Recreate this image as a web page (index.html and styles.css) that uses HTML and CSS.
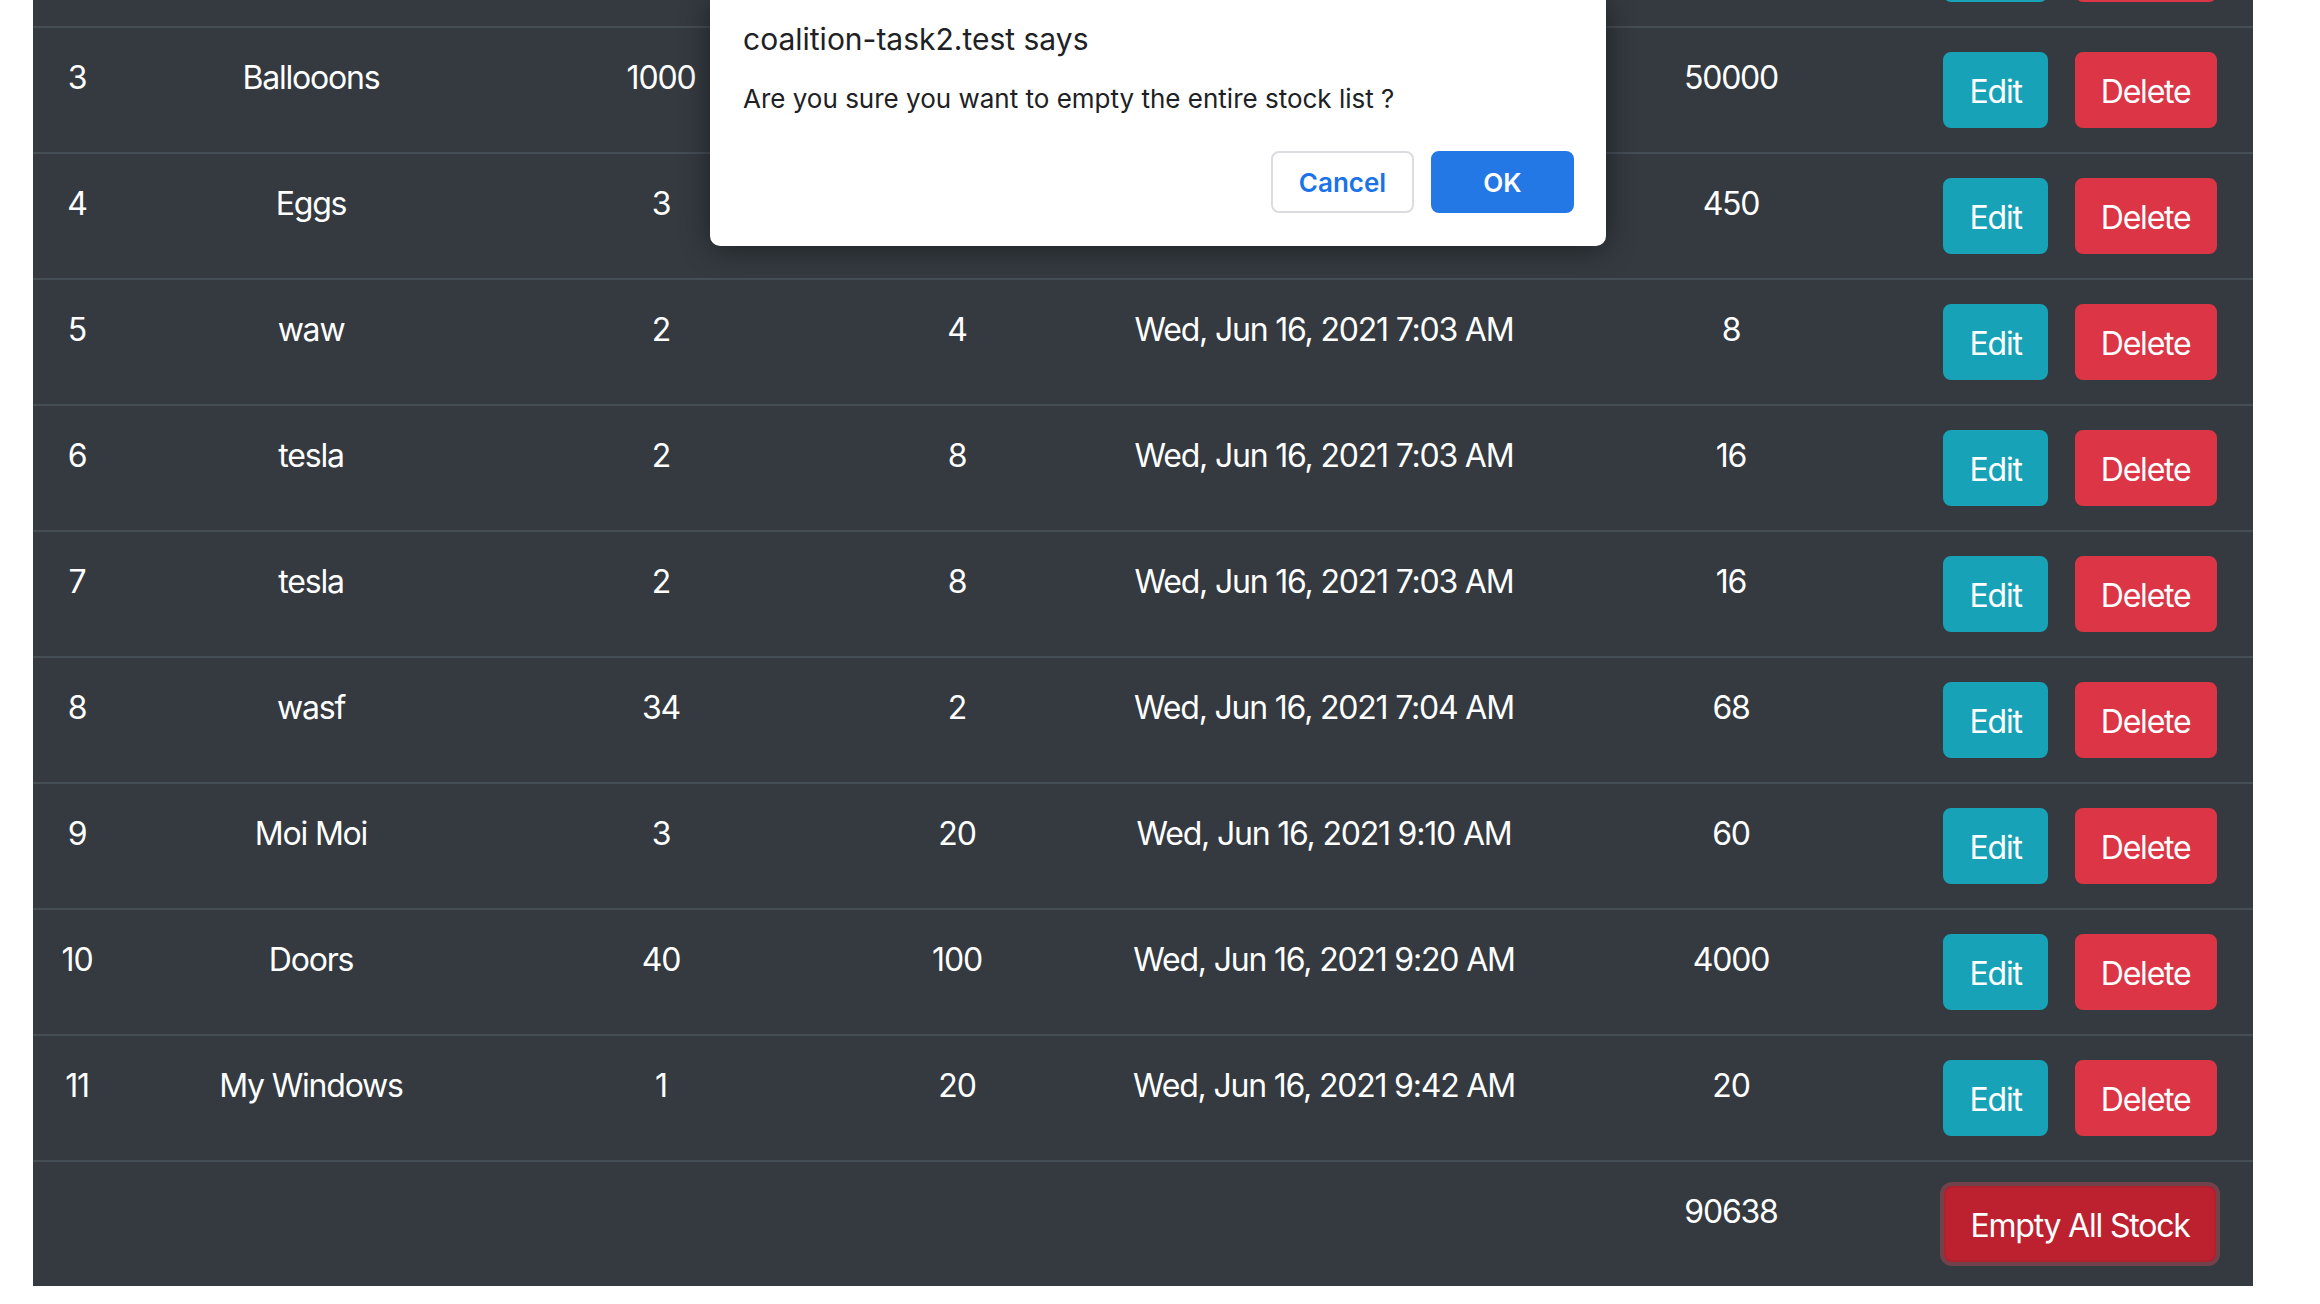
FILE: index.html
```html
<!DOCTYPE html>
<html lang="en">
<head>
<meta charset="utf-8">
<title>Stock list</title>
<link rel="stylesheet" href="styles.css">
</head>
<body>
<div class="page">
  <div class="container">
    <table class="stock">
      <colgroup>
        <col class="c-id"><col class="c-name"><col class="c-qty"><col class="c-price"><col class="c-date"><col class="c-total"><col class="c-act">
      </colgroup>
      <tbody>
        <tr><td>2</td><td>Chairs</td><td>120</td><td>300</td><td>Wed, Jun 16, 2021 6:58 AM</td><td>36000</td><td class="act"><div class="actions"><button class="btn btn-info">Edit</button><button class="btn btn-danger">Delete</button></div></td></tr>
        <tr><td>3</td><td>Ballooons</td><td>1000</td><td>50</td><td>Wed, Jun 16, 2021 7:01 AM</td><td>50000</td><td class="act"><div class="actions"><button class="btn btn-info">Edit</button><button class="btn btn-danger">Delete</button></div></td></tr>
        <tr><td>4</td><td>Eggs</td><td>3</td><td>150</td><td>Wed, Jun 16, 2021 7:02 AM</td><td>450</td><td class="act"><div class="actions"><button class="btn btn-info">Edit</button><button class="btn btn-danger">Delete</button></div></td></tr>
        <tr><td>5</td><td>waw</td><td>2</td><td>4</td><td>Wed, Jun 16, 2021 7:03 AM</td><td>8</td><td class="act"><div class="actions"><button class="btn btn-info">Edit</button><button class="btn btn-danger">Delete</button></div></td></tr>
        <tr><td>6</td><td>tesla</td><td>2</td><td>8</td><td>Wed, Jun 16, 2021 7:03 AM</td><td>16</td><td class="act"><div class="actions"><button class="btn btn-info">Edit</button><button class="btn btn-danger">Delete</button></div></td></tr>
        <tr><td>7</td><td>tesla</td><td>2</td><td>8</td><td>Wed, Jun 16, 2021 7:03 AM</td><td>16</td><td class="act"><div class="actions"><button class="btn btn-info">Edit</button><button class="btn btn-danger">Delete</button></div></td></tr>
        <tr><td>8</td><td>wasf</td><td>34</td><td>2</td><td>Wed, Jun 16, 2021 7:04 AM</td><td>68</td><td class="act"><div class="actions"><button class="btn btn-info">Edit</button><button class="btn btn-danger">Delete</button></div></td></tr>
        <tr><td>9</td><td>Moi Moi</td><td>3</td><td>20</td><td>Wed, Jun 16, 2021 9:10 AM</td><td>60</td><td class="act"><div class="actions"><button class="btn btn-info">Edit</button><button class="btn btn-danger">Delete</button></div></td></tr>
        <tr><td>10</td><td>Doors</td><td>40</td><td>100</td><td>Wed, Jun 16, 2021 9:20 AM</td><td>4000</td><td class="act"><div class="actions"><button class="btn btn-info">Edit</button><button class="btn btn-danger">Delete</button></div></td></tr>
        <tr><td>11</td><td>My Windows</td><td>1</td><td>20</td><td>Wed, Jun 16, 2021 9:42 AM</td><td>20</td><td class="act"><div class="actions"><button class="btn btn-info">Edit</button><button class="btn btn-danger">Delete</button></div></td></tr>
      </tbody>
      <tfoot>
        <tr><td></td><td></td><td></td><td></td><td></td><td>90638</td><td class="act"><div class="actions"><button class="btn btn-danger-active">Empty All Stock</button></div></td></tr>
      </tfoot>
    </table>
  </div>

  <div class="dialog" role="alertdialog">
    <p class="dialog-title">coalition-task2.test says</p>
    <p class="dialog-msg">Are you sure you want to empty the entire stock list ?</p>
    <div class="dialog-actions">
      <button class="dbtn dbtn-cancel">Cancel</button>
      <button class="dbtn dbtn-ok">OK</button>
    </div>
  </div>
</div>
</body>
</html>
```

FILE: styles.css
```css
html, body {
  margin: 0;
  padding: 0;
  background: #ffffff;
}

.page {
  position: relative;
  height: 1304px;
  overflow: hidden;
}

.container {
  padding-left: 33px;
}

.stock {
  width: 2220px;
  margin-top: -100px;
  border-collapse: collapse;
  table-layout: fixed;
  background: #343a40;
  color: #ffffff;
  font-family: Inter, "Liberation Sans", Arial, sans-serif;
  font-size: 32px;
  line-height: 48px;
  letter-spacing: -1.2px;
}

.c-id { width: 88px; }
.c-name { width: 380px; }
.c-qty { width: 320px; }
.c-price { width: 272px; }
.c-date { width: 462px; }
.c-total { width: 352px; }
.c-act { width: 346px; }

.stock td {
  padding: 26px 12px 22px;
  border-top: 2px solid #454d55;
  text-align: center;
  vertical-align: top;
  white-space: nowrap;
}

.stock td.act {
  padding: 24px 12px;
}

.actions {
  display: flex;
  justify-content: center;
  gap: 27px;
}

.btn {
  display: inline-block;
  font: inherit;
  letter-spacing: inherit;
  color: #ffffff;
  padding: 14px 24px 10px;
  border: 2px solid transparent;
  border-radius: 8px;
  line-height: 48px;
  cursor: pointer;
}

.btn-info {
  background: #17a2b8;
  border-color: #17a2b8;
}

.btn-danger {
  background: #dc3545;
  border-color: #dc3545;
}

.btn-danger-active {
  background: #bd2130;
  border-color: #b21f2d;
  box-shadow: 0 0 0 4px rgba(225, 83, 97, 0.35);
}

.dialog {
  position: absolute;
  left: 710px;
  top: 0;
  width: 896px;
  box-sizing: border-box;
  padding: 21px 32px 33px 33px;
  background: #ffffff;
  border-radius: 0 0 10px 10px;
  box-shadow: 0 2px 30px rgba(0, 0, 0, 0.45);
  font-family: Inter, "Noto Sans", sans-serif;
  color: #202124;
}

.dialog-title {
  margin: 0;
  font-size: 30px;
  line-height: 36px;
  font-weight: 400;
}

.dialog-msg {
  margin: 26px 0 0;
  font-size: 26px;
  line-height: 32px;
  font-weight: 400;
}

.dialog-actions {
  display: flex;
  justify-content: flex-end;
  gap: 17px;
  margin-top: 36px;
}

.dbtn {
  box-sizing: border-box;
  height: 62px;
  width: 143px;
  border-radius: 8px;
  font-family: Inter, "Noto Sans", sans-serif;
  font-size: 26px;
  font-weight: 600;
  cursor: pointer;
}

.dbtn-cancel {
  background: #ffffff;
  color: #1a73e8;
  border: 2px solid #dadce0;
}

.dbtn-ok {
  background: #2478e6;
  color: #ffffff;
  border: 2px solid #2478e6;
}
```
